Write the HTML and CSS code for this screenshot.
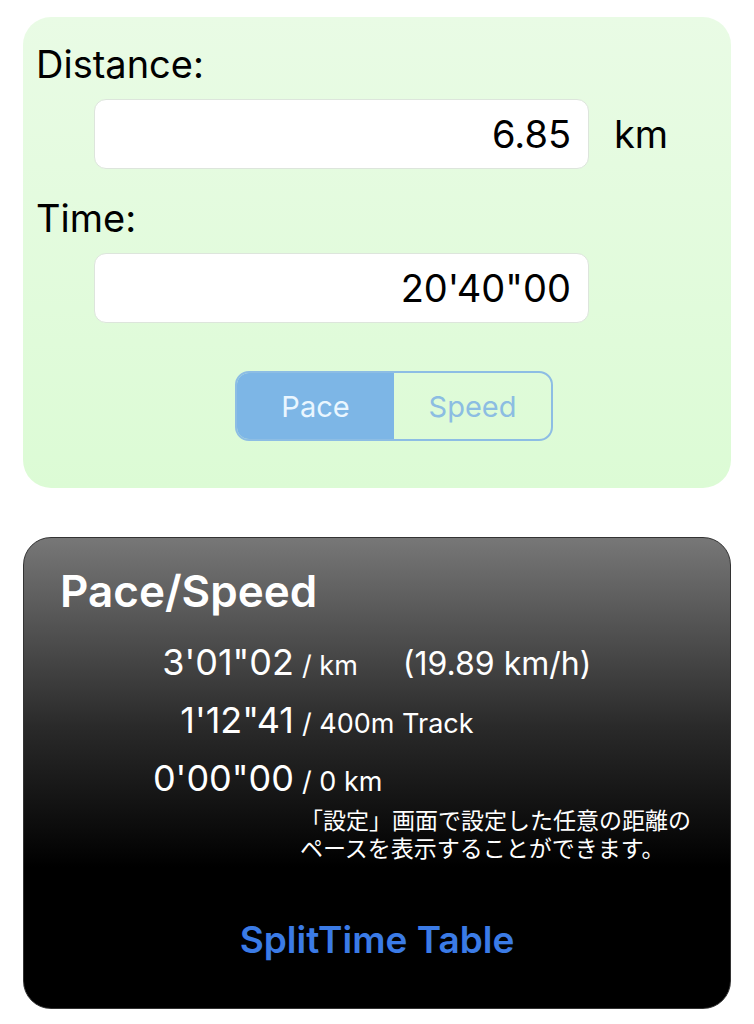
FILE: index.html
```html
<!DOCTYPE html>
<html lang="ja">
  <head>
    <meta charset="UTF-8" />
    <meta name="viewport" content="width=device-width, initial-scale=1.0" />
    <title>Pace Calculator</title>
    <link rel="stylesheet" href="styles.css">
  </head>
  <body>
    <div class="input-card">
      <div class="label">Distance:</div>
      <div class="field-row">
        <input class="field" type="text" value="6.85" readonly />
        <span class="unit">km</span>
      </div>

      <div class="label">Time:</div>
      <div class="field-row">
        <input class="field" type="text" value="20'40&quot;00" readonly />
      </div>

      <div class="segment">
        <button class="seg-btn active">Pace</button>
        <button class="seg-btn">Speed</button>
      </div>
    </div>

    <div class="result-card">
      <h2>Pace/Speed</h2>
      <div class="rows">
        <div class="row">
          <span class="time">3'01"02</span>
          <span class="per">/ km</span>
          <span class="speed">(19.89 km/h)</span>
        </div>
        <div class="row">
          <span class="time">1'12"41</span>
          <span class="per">/ 400m Track</span>
        </div>
        <div class="row">
          <span class="time">0'00"00</span>
          <span class="per">/ 0 km</span>
        </div>
      </div>
      <p class="note">「設定」画面で設定した任意の距離のペースを表示することができます。</p>
      <a class="split-link" href="#">SplitTime Table</a>
    </div>
  </body>
</html>
```

FILE: styles.css
```css
body {
  margin: 0;
  padding: 17px 23px;
  background: #fff;
  font-family: Inter, "Noto Sans CJK JP", sans-serif;
  color: #000;
}

.input-card {
  background: linear-gradient(180deg, #e9fbe5 0%, #dcfbd5 100%);
  border-radius: 28px;
  padding: 27px 13px 47px;
}

.label {
  font-size: 38px;
  line-height: 40px;
}

.field-row {
  display: flex;
  align-items: center;
  gap: 25px;
  margin: 15px 0 29px 58px;
}

.field {
  width: 495px;
  height: 70px;
  box-sizing: border-box;
  border: 1px solid #dde5dc;
  border-radius: 12px;
  background: #fff;
  padding: 0 17px;
  text-align: right;
  font-family: Inter, sans-serif;
  font-size: 38px;
  color: #000;
  outline: none;
}

.unit {
  font-size: 38px;
}

.segment {
  display: flex;
  width: 318px;
  height: 70px;
  box-sizing: border-box;
  margin: 48px 0 0 199px;
  border: 2px solid #8dbde4;
  border-radius: 14px;
  overflow: hidden;
}

.seg-btn {
  flex: 1;
  border: none;
  background: transparent;
  font-family: Inter, sans-serif;
  font-size: 29px;
  color: #8cbde2;
  cursor: pointer;
}

.seg-btn.active {
  background: #7db6e6;
  color: #eaf6ff;
}

.result-card {
  margin-top: 49px;
  border: 1px solid #333;
  border-radius: 28px;
  background: linear-gradient(180deg, #777 0%, #2a2a2a 40%, #000 70%);
  color: #fff;
  padding: 28px 0 48px;
  text-align: center;
}

.result-card h2 {
  margin: 0 0 28px 36px;
  text-align: left;
  font-size: 44px;
  line-height: 50px;
  font-weight: 600;
}

.rows {
  display: flex;
  flex-direction: column;
  gap: 14px;
}

.row {
  display: flex;
  align-items: baseline;
  height: 44px;
  line-height: 1;
  text-align: left;
}

.time {
  width: 270px;
  text-align: right;
  font-size: 36px;
}

.per {
  margin-left: 8px;
  font-size: 27px;
}

.speed {
  margin-left: 45px;
  font-size: 32px;
}

.note {
  width: 395px;
  margin: 3px 0 57px 276px;
  text-align: left;
  font-size: 23px;
  line-height: 28px;
}

.split-link {
  display: block;
  font-size: 37px;
  line-height: 40px;
  font-weight: 600;
  color: #3b7be6;
  text-decoration: none;
}
```
